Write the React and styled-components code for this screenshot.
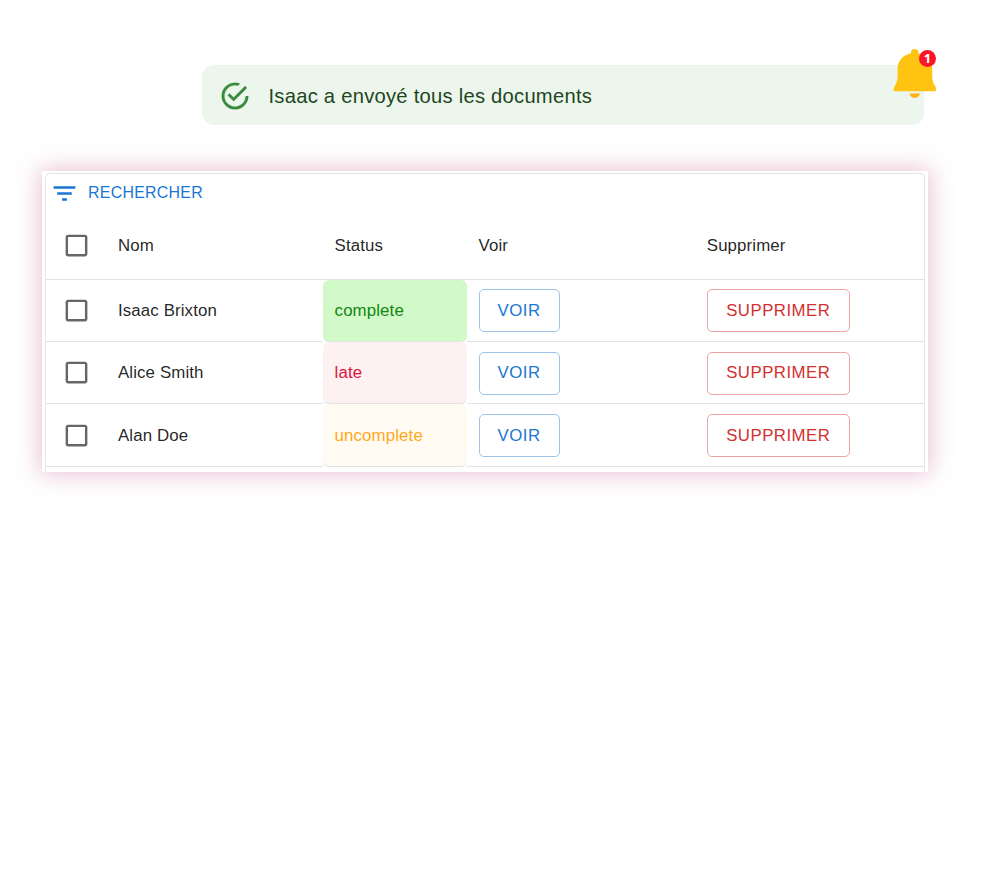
import React from "react";
import styled, { createGlobalStyle } from "styled-components";

const GlobalStyle = createGlobalStyle`
  *, *::before, *::after { box-sizing: border-box; }
  body {
    margin: 0;
    background: #fff;
    color: rgba(0, 0, 0, 0.87);
    font-family: "Liberation Sans", Arial, sans-serif;
    font-size: 16.85px;
  }
`;

const Page = styled.main`
  display: flex;
  flex-direction: column;
  width: 981px;
  min-height: 871px;
  padding: 65px 53px 0 42px;
`;

const Alert = styled.div`
  position: relative;
  display: flex;
  align-items: center;
  gap: 17.5px;
  width: 722px;
  height: 60px;
  margin-left: 160px;
  padding: 2px 17px 0;
  border-radius: 12px;
  background: #edf6ed;
`;

const AlertIcon = styled.svg`
  width: 32px;
  height: 32px;
  flex: none;
  fill: #3a8a3e;
  stroke: #3a8a3e;
  stroke-width: 0.2;
`;

const AlertText = styled.p`
  margin: 0;
  color: #1e4620;
  font-size: 20.2px;
  letter-spacing: 0.25px;
  line-height: 30px;
  white-space: nowrap;
`;

const Notification = styled.div`
  position: absolute;
  top: -17px;
  right: -13px;
  width: 44px;
  height: 52px;
`;

const BellIcon = styled.svg`
  display: block;
  width: 44px;
  height: 52px;
`;

const Badge = styled.span`
  position: absolute;
  top: 2px;
  right: 1px;
  display: grid;
  place-items: center;
  width: 17px;
  height: 17px;
  border-radius: 50%;
  background: #fa1529;
  color: #fff;
  font: 700 13px/17px "Open Sans", sans-serif;
`;

const Card = styled.section`
  width: 886px;
  height: 301px;
  margin-top: 46px;
  padding: 2px 3px 0;
  background: #fff;
  box-shadow: 0 0 22px 2px rgba(198, 100, 145, 0.4);
`;

const Grid = styled.div`
  height: 299px;
  border: 1px solid #e4e4e4;
  border-bottom: 0;
  border-radius: 5px 5px 0 0;
`;

const Toolbar = styled.button`
  display: flex;
  align-items: center;
  gap: 9px;
  height: 38px;
  padding: 0 4px;
  border: 0;
  background: none;
  color: #1976d2;
  font: 15.9px "Liberation Sans", Arial, sans-serif;
  letter-spacing: 0.28px;
`;

const FilterIcon = styled.svg`
  width: 29px;
  height: 29px;
  fill: currentColor;
`;

const Row = styled.div`
  display: grid;
  grid-template-columns: 60px 216.6px 144px 228.2px 1fr;
  height: ${({ $header }) => ($header ? "67.7px" : "62.4px")};
`;

const Cell = styled.div`
  display: flex;
  align-items: center;
  padding: 1px 12px 0;
  border-bottom: 1px solid #e2e2e2;
  letter-spacing: 0.12px;
  white-space: nowrap;
`;

const CheckCell = styled(Cell)`
  padding: 0 0 0 16px;
`;

const statusColors = {
  complete: ["#d2f9c8", "#118611"],
  late: ["#fef1f1", "#dc143c"],
  uncomplete: ["#fffaf2", "#ffa91b"],
};

const StatusCell = styled(Cell)`
  border-radius: 6px;
  background: ${({ $status }) => statusColors[$status][0]};
  color: ${({ $status }) => statusColors[$status][1]};
`;

const CheckIcon = styled.svg`
  width: 29px;
  height: 29px;
  fill: #666;
`;

const Button = styled.button`
  width: ${({ $danger }) => ($danger ? "143px" : "81px")};
  height: 43px;
  padding: 0;
  border: 1px solid ${({ $danger }) => ($danger ? "#efa3a3" : "#9dc3eb")};
  border-radius: 5px;
  background: #fff;
  color: ${({ $danger }) => ($danger ? "#d32f2f" : "#1976d2")};
  font: 16.8px/40px "Liberation Sans", Arial, sans-serif;
  letter-spacing: 0.5px;
`;

const people = [
  { name: "Isaac Brixton", status: "complete" },
  { name: "Alice Smith", status: "late" },
  { name: "Alan Doe", status: "uncomplete" },
];

function Checkbox() {
  return (
    <CheckIcon viewBox="0 0 24 24" role="checkbox" aria-checked="false">
      <path d="M19 5v14H5V5h14m0-2H5c-1.1 0-2 .9-2 2v14c0 1.1.9 2 2 2h14c1.1 0 2-.9 2-2V5c0-1.1-.9-2-2-2z" />
    </CheckIcon>
  );
}

export default function App() {
  return (
    <>
      <GlobalStyle />
      <Page>
        <Alert role="alert">
          <AlertIcon viewBox="0 0 24 24">
            <path d="M20,12A8,8 0 0,1 12,20A8,8 0 0,1 4,12A8,8 0 0,1 12,4C12.76,4 13.5,4.11 14.2,4.31L15.77,2.74C14.61,2.26 13.34,2 12,2A10,10 0 0,0 2,12A10,10 0 0,0 12,22A10,10 0 0,0 22,12M7.91,10.08L6.5,11.5L11,16L21,6L19.59,4.58L11,13.17L7.91,10.08Z" />
          </AlertIcon>
          <AlertText>Isaac a envoyé tous les documents</AlertText>
          <Notification>
            <BellIcon viewBox="0 0 44 52">
              <path
                fill="#ffc411"
                d="M18 5.500V4.800a3.700 3.700 0 0 1 7.400 0V5.500C32 6.500 39.200 11.500 39.200 21V28C39.200 33 40.400 35.500 42.600 39C43.900 41.200 43.200 43.300 41 43.300H2.700C.5 43.300-.1 41.200 1.200 39C3.400 35.500 4.600 33 4.600 28V21C4.600 11.500 11.500 6.500 18 5.500Z"
              />
              <path fill="#ffb015" d="M16.500 45.500H27C26.500 48.200 24.500 49.900 21.700 49.900S17 48.200 16.500 45.500Z" />
            </BellIcon>
            <Badge>1</Badge>
          </Notification>
        </Alert>

        <Card>
          <Grid>
            <Toolbar>
              <FilterIcon viewBox="0 0 24 24">
                <path d="M10 18h4v-2h-4v2zM3 6v2h18V6H3zm3 7h12v-2H6v2z" />
              </FilterIcon>
              RECHERCHER
            </Toolbar>
            <Row $header>
              <CheckCell><Checkbox /></CheckCell>
              <Cell>Nom</Cell>
              <Cell>Status</Cell>
              <Cell>Voir</Cell>
              <Cell>Supprimer</Cell>
            </Row>
            {people.map(({ name, status }) => (
              <Row key={name}>
                <CheckCell><Checkbox /></CheckCell>
                <Cell>{name}</Cell>
                <StatusCell $status={status}>{status}</StatusCell>
                <Cell><Button>VOIR</Button></Cell>
                <Cell><Button $danger>SUPPRIMER</Button></Cell>
              </Row>
            ))}
          </Grid>
        </Card>
      </Page>
    </>
  );
}
